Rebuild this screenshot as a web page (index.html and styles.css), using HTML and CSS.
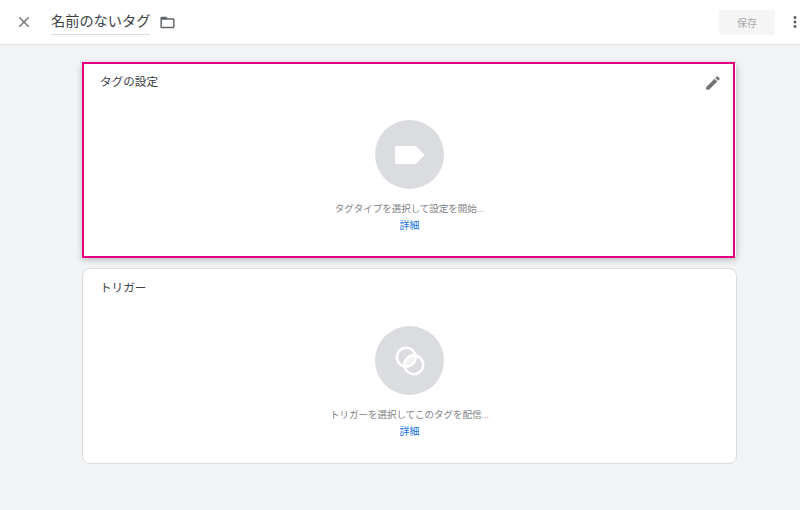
FILE: index.html
```html
<!DOCTYPE html>
<html lang="ja">

<head>
    <meta charset="UTF-8">
    <meta name="viewport" content="width=device-width, initial-scale=1.0">
    <title>名前のないタグ</title>
    <link rel="stylesheet" href="styles.css">
</head>

<body>
    <header class="topbar">
        <svg class="close-icon" width="18" height="18" viewBox="0 0 24 24">
            <path d="M19 6.41 17.59 5 12 10.59 6.41 5 5 6.41 10.59 12 5 17.59 6.41 19 12 13.41 17.59 19 19 17.59 13.41 12z" />
        </svg>
        <div class="tag-name">名前のないタグ</div>
        <svg class="folder-icon" width="17" height="17" viewBox="0 0 24 24">
            <path d="M20 6h-8l-2-2H4c-1.1 0-1.99.9-1.99 2L2 18c0 1.1.9 2 2 2h16c1.1 0 2-.9 2-2V8c0-1.1-.9-2-2-2zm0 12H4V8h16v10z" />
        </svg>
        <button class="save-button">保存</button>
        <svg class="more-icon" width="18" height="18" viewBox="0 0 24 24">
            <path d="M12 8c1.1 0 2-.9 2-2s-.9-2-2-2-2 .9-2 2 .9 2 2 2zm0 2c-1.1 0-2 .9-2 2s.9 2 2 2 2-.9 2-2-.9-2-2-2zm0 6c-1.1 0-2 .9-2 2s.9 2 2 2 2-.9 2-2-.9-2-2-2z" />
        </svg>
    </header>

    <main class="content">
        <!-- タグの設定 -->
        <section class="card card-raised">
            <div class="highlight"></div>
            <div class="card-head">
                <h2>タグの設定</h2>
                <svg class="edit-icon" width="18" height="18" viewBox="0 0 24 24">
                    <path d="M3 17.25V21h3.75L17.81 9.94l-3.75-3.75L3 17.25zM20.71 7.04c.39-.39.39-1.02 0-1.41l-2.34-2.34c-.39-.39-1.02-.39-1.41 0l-1.83 1.83 3.75 3.75 1.83-1.83z" />
                </svg>
            </div>
            <div class="card-body">
                <div class="circle">
                    <svg width="30" height="18" viewBox="0 0 30 18">
                        <path d="M0 1a1 1 0 0 1 1-1h20l8.5 9-8.5 9H1a1 1 0 0 1-1-1z" />
                    </svg>
                </div>
                <p>タグタイプを選択して設定を開始...</p>
                <a href="#">詳細</a>
            </div>
        </section>

        <!-- トリガー -->
        <section class="card">
            <div class="card-head">
                <h2>トリガー</h2>
            </div>
            <div class="card-body">
                <div class="circle">
                    <svg width="30" height="30" viewBox="0 0 30 30">
                        <clipPath id="lensClip">
                            <circle cx="11.2" cy="11.2" r="9.4" />
                        </clipPath>
                        <circle class="lens" cx="18.8" cy="18.8" r="9.4" clip-path="url(#lensClip)" />
                        <circle class="ring" cx="11.2" cy="11.2" r="9.4" />
                        <circle class="ring" cx="18.8" cy="18.8" r="9.4" />
                    </svg>
                </div>
                <p>トリガーを選択してこのタグを配信...</p>
                <a href="#">詳細</a>
            </div>
        </section>
    </main>
</body>

</html>
```

FILE: styles.css
```css
body {
    margin: 0;
    height: 510px;
    overflow: hidden;
    background-color: #f1f3f4;
    color: #3c4043;
    font-family: Roboto, "Noto Sans CJK JP", sans-serif;
}

.topbar {
    display: flex;
    align-items: center;
    height: 44px;
    background-color: #fff;
    border-bottom: 1px solid #e4e5e7;
}

.close-icon {
    margin-left: 15px;
    fill: #757575;
}

.tag-name {
    margin-left: 18px;
    padding-bottom: 2px;
    border-bottom: 1px solid #dadce0;
    font-size: 14.2px;
    line-height: 22px;
    color: #3c4043;
}

.folder-icon {
    margin-left: 9px;
    fill: #5f6368;
}

.save-button {
    margin-left: auto;
    width: 56px;
    height: 25px;
    border: none;
    border-radius: 3px;
    background-color: #f5f5f5;
    color: #a8a8a8;
    font-family: inherit;
    font-size: 10px;
}

.more-icon {
    margin: 0 -4px 0 11px;
    fill: #5f6368;
}

.content {
    display: flex;
    flex-direction: column;
    gap: 10px;
    width: 655px;
    margin: 17px 0 0 82px;
}

.card {
    position: relative;
    height: 196px;
    box-sizing: border-box;
    background-color: #fff;
    border: 1px solid #dadce0;
    border-radius: 8px;
    padding: 10px 17px;
}

.card-raised {
    border-color: transparent;
    border-radius: 4px;
    background-clip: padding-box;
    box-shadow: 0 2px 6px rgba(60, 64, 67, 0.3);
}

/* ピンクの枠 */
.highlight {
    position: absolute;
    top: -1px;
    left: -1px;
    width: 653px;
    height: 196px;
    box-sizing: border-box;
    border: 2px solid #e6007e;
}

.card-head {
    display: flex;
    justify-content: space-between;
    align-items: flex-start;
    height: 18px;
}

h2 {
    margin: 0;
    font-size: 11.6px;
    font-weight: 400;
    line-height: 18px;
}

.edit-icon {
    margin: 1px -3px 0 0;
    fill: #757575;
}

.card-body {
    display: flex;
    flex-direction: column;
    align-items: center;
    margin-top: 29px;
}

.circle {
    display: flex;
    align-items: center;
    justify-content: center;
    width: 69px;
    height: 69px;
    border-radius: 50%;
    background-color: #dadce0;
}

.circle svg {
    fill: #fff;
}

.ring {
    fill: none;
    stroke: #fff;
    stroke-width: 2.6;
}

.lens {
    fill: #fff;
    opacity: 0.6;
}

.card-body p {
    margin: 13px 0 0;
    font-size: 9.5px;
    line-height: 14px;
    color: #808285;
}

.card-body a {
    margin-top: 3px;
    font-size: 10px;
    line-height: 14px;
    color: #1a73e8;
    text-decoration: none;
}
```
